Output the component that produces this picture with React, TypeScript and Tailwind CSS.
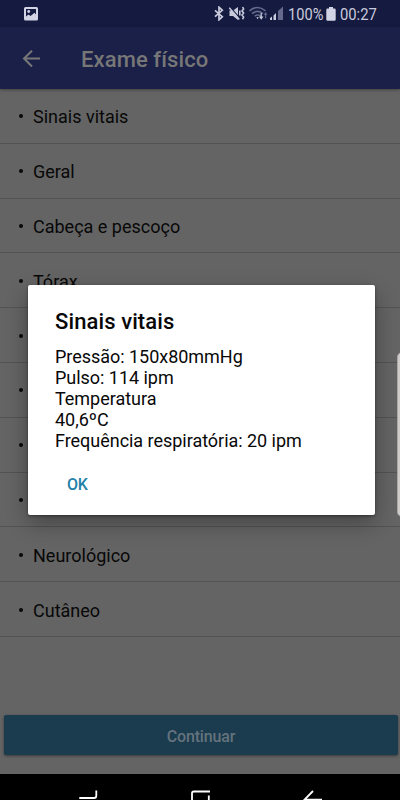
import React from 'react';

// Rows with an empty label sit entirely behind the dialog
const sections = [
  'Sinais vitais',
  'Geral',
  'Cabeça e pescoço',
  'Tórax',
  '',
  '',
  '',
  '',
  'Neurológico',
  'Cutâneo',
];

const vitals = [
  'Pressão: 150x80mmHg',
  'Pulso: 114 ipm',
  'Temperatura',
  '40,6ºC',
  'Frequência respiratória: 20 ipm',
];

const StatusBar: React.FC = () => (
  <div className="flex h-[27px] shrink-0 items-center bg-[#151a40] pl-6 pr-[23px] text-[#c9cbdc]">
    <svg className="h-[14px] w-[14px]" viewBox="0 0 14 14">
      <path fillRule="evenodd" d="M1.5 0h11Q14 0 14 1.5V12q0 1.5-1.5 1.5h-11Q0 13.5 0 12V1.5Q0 0 1.5 0zM2 2v7.5l2.5-2L6.5 9l4-3.2L12 7.5V2z" fill="#d2d3e4" />
      <circle cx="4.7" cy="4.5" r="1.4" fill="#d2d3e4" />
    </svg>
    <svg className="ml-auto h-[15px] w-[69px] shrink-0" viewBox="0 0 69 15" fill="none">
      {/* bluetooth */}
      <path d="M1 4.3 8.3 10.7 5 13.8V1.2L8.3 4.3 1 10.7" stroke="#c9cbdc" strokeWidth="1.7" />
      {/* muted speaker with vibration */}
      <path d="M15.5 4.5h3.5l5-3.5v13l-5-4h-3.5z" fill="#c9cbdc" />
      <path d="m16.5 1.3 9.5 11" stroke="#151a40" strokeWidth="1.2" />
      <path d="m15.3 1.8 10 11.7" stroke="#c9cbdc" strokeWidth="1.4" />
      <path d="m28.6 1 1 2-1.6 2 1.6 2-1.6 2 1.6 2-1 2.3M25.8 4.5v5" stroke="#c9cbdc" strokeWidth="1.6" />
      {/* wifi with traffic arrows */}
      <path d="M35.5 4.8q8-6.6 16 0M38 7.6q5.5-4.4 11 0M40.7 10.2q3-2.4 6 0" stroke="#656a8d" strokeWidth="1.6" />
      <path d="M47.2 7v5" stroke="#c9cbdc" strokeWidth="1.3" />
      <path d="M45 10.5h4.4l-2.2 3.2zM42.3 11.3h2.6l-1.3 2z" fill="#c9cbdc" />
      <path d="M51.6 12.2V8" stroke="#656a8d" strokeWidth="1.2" />
      <path d="m49.6 8.8 2-2.8 2 2.8z" fill="#656a8d" />
      {/* signal */}
      <path d="M56 14v-2l2-1.5V14zM59.5 14V9.5L62 7v7z" fill="#c9cbdc" />
      <path d="M64 14V5l5-4.5V14z" fill="#656a8d" />
    </svg>
    <span className="ml-[5px] w-[36px] whitespace-nowrap pt-[2px] text-[17px] leading-[27px]">
      <span className="inline-block origin-left scale-x-[0.86]">100%</span>
    </span>
    <svg className="ml-[2px] h-[14px] w-[10px] shrink-0" viewBox="0 0 10 14">
      <path d="M3 0h4v1.6h1.5Q9.7 1.6 9.7 3v9.5q0 1.3-1.3 1.3H1.6Q.3 13.8.3 12.5V3Q.3 1.6 1.5 1.6H3z" fill="#d2d3e4" />
    </svg>
    <span className="ml-[4px] w-[37px] whitespace-nowrap pt-[2px] text-[17px] leading-[27px]">
      <span className="inline-block origin-left scale-x-[0.87]">00:27</span>
    </span>
  </div>
);

const AppBar: React.FC = () => (
  <header className="relative z-10 flex h-[62px] shrink-0 items-center bg-[#1a2048] pl-[22px] text-[#777777] shadow-[0_1px_3px_rgba(0,0,0,0.35)]">
    <svg className="mt-px h-[18px] w-[19px]" viewBox="0 0 19 18" fill="none" stroke="#777777" strokeWidth="2">
      <path d="M18 8.5H2M10 .8 2 8.5l8 8" />
    </svg>
    <h1 className="ml-[40px] pt-[2px] text-[22px] font-medium tracking-[0.1px]">Exame físico</h1>
  </header>
);

const VitalsDialog: React.FC = () => (
  <div
    role="dialog"
    className="absolute left-[28px] top-[285px] z-20 h-[230px] w-[347px] rounded-[2px] bg-white pl-[27px] pt-[23px] text-[#080808] shadow-[0_8px_22px_rgba(0,0,0,0.32),0_1px_3px_rgba(0,0,0,0.4)]"
  >
    <h2 className="text-[22px] font-medium leading-[28px] tracking-[0.1px]">Sinais vitais</h2>
    <div className="mt-[10px] text-[18px] leading-[21px] tracking-[-0.03px]">
      {vitals.map((line) => (
        <p key={line} className="whitespace-nowrap">{line}</p>
      ))}
    </div>
    <button className="ml-[12px] mt-[24px] block text-[16px] font-medium leading-[20px] tracking-[-0.3px] text-[#2481a8]">OK</button>
  </div>
);

const NavigationBar: React.FC = () => (
  <nav className="h-[26px] shrink-0 bg-black">
    <svg className="block h-[26px] w-[400px]" viewBox="0 0 400 26" fill="none" stroke="#ffffff" strokeWidth="1.8">
      <path d="M79.3 24H94q2.3 0 2.3-2.3v-5.3" />
      <path d="M192 27v-7.7q0-1.8 1.8-1.8H210M208.8 21.5V27" />
      <path d="M313 17l-8.5 8.7H322" />
    </svg>
  </nav>
);

export default function App() {
  return (
    <div className="relative flex h-[800px] w-[400px] flex-col overflow-hidden bg-[#646464] font-['Roboto',sans-serif]">
      <StatusBar />
      <AppBar />
      <ul>
        {sections.map((label, index) => (
          <li
            key={index}
            className="flex h-[54.8px] items-center border-b border-[#535353] pl-[19px] text-[18px] text-[#080808]"
          >
            <span className="mr-[10px] mt-px h-1 w-1 rounded-full bg-[#080808]" />
            <span className="pt-[2px]">{label}</span>
          </li>
        ))}
      </ul>
      <button className="ml-[4px] mt-auto mb-[19px] h-[40px] w-[394px] shrink-0 rounded-[2px] bg-[#1b3b4e] pt-[3px] text-[16px] font-medium tracking-[-0.15px] text-[#64737d] shadow-[0_1px_3px_rgba(0,0,0,0.45)]">
        Continuar
      </button>
      <NavigationBar />
      <VitalsDialog />
      {/* edge panel handle */}
      <div className="absolute left-[397px] top-[352px] z-20 h-[165px] w-[8px] rounded-l-[5px] border border-[#aaa6a6] bg-[#d0cccc]" />
    </div>
  );
}
